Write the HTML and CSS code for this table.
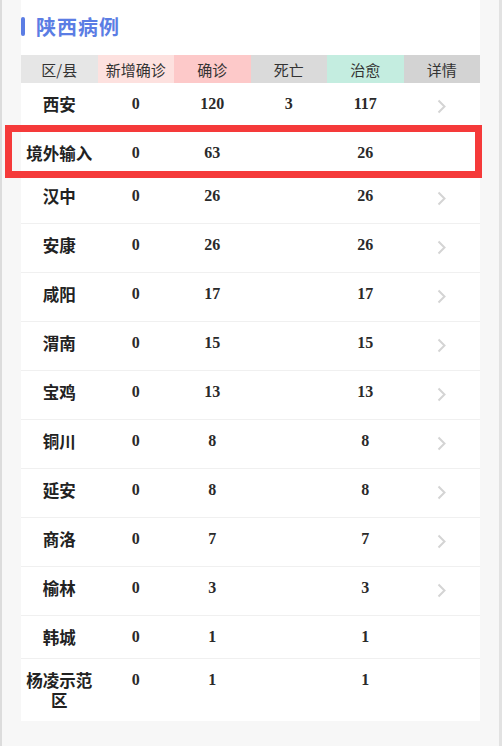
FILE: index.html
```html
<!DOCTYPE html>
<html lang="zh">
<head>
<meta charset="utf-8">
<title>陕西病例</title>
<link rel="stylesheet" href="styles.css">
</head>
<body>
<div class="page">
  <div class="card">
    <h2 class="title"><span class="bar"></span>陕西病例</h2>
    <div class="table">
      <div class="head">
        <div class="h h-area">区/县</div>
        <div class="h h-new">新增确诊</div>
        <div class="h h-conf">确诊</div>
        <div class="h h-dead">死亡</div>
        <div class="h h-cure">治愈</div>
        <div class="h h-more">详情</div>
      </div>
      <div class="row more"><div class="name">西安</div><div>0</div><div>120</div><div>3</div><div>117</div><div class="chev"><svg width="9" height="15" viewBox="0 0 9 15"><path d="M1.5 1.5 L7.5 7.5 L1.5 13.5" fill="none" stroke="#d4d4d4" stroke-width="2"/></svg></div></div>
      <div class="row mark"><div class="name">境外输入</div><div>0</div><div>63</div><div></div><div>26</div><div></div><span class="box"></span></div>
      <div class="row more"><div class="name">汉中</div><div>0</div><div>26</div><div></div><div>26</div><div class="chev"><svg width="9" height="15" viewBox="0 0 9 15"><path d="M1.5 1.5 L7.5 7.5 L1.5 13.5" fill="none" stroke="#d4d4d4" stroke-width="2"/></svg></div></div>
      <div class="row more"><div class="name">安康</div><div>0</div><div>26</div><div></div><div>26</div><div class="chev"><svg width="9" height="15" viewBox="0 0 9 15"><path d="M1.5 1.5 L7.5 7.5 L1.5 13.5" fill="none" stroke="#d4d4d4" stroke-width="2"/></svg></div></div>
      <div class="row more"><div class="name">咸阳</div><div>0</div><div>17</div><div></div><div>17</div><div class="chev"><svg width="9" height="15" viewBox="0 0 9 15"><path d="M1.5 1.5 L7.5 7.5 L1.5 13.5" fill="none" stroke="#d4d4d4" stroke-width="2"/></svg></div></div>
      <div class="row more"><div class="name">渭南</div><div>0</div><div>15</div><div></div><div>15</div><div class="chev"><svg width="9" height="15" viewBox="0 0 9 15"><path d="M1.5 1.5 L7.5 7.5 L1.5 13.5" fill="none" stroke="#d4d4d4" stroke-width="2"/></svg></div></div>
      <div class="row more"><div class="name">宝鸡</div><div>0</div><div>13</div><div></div><div>13</div><div class="chev"><svg width="9" height="15" viewBox="0 0 9 15"><path d="M1.5 1.5 L7.5 7.5 L1.5 13.5" fill="none" stroke="#d4d4d4" stroke-width="2"/></svg></div></div>
      <div class="row more"><div class="name">铜川</div><div>0</div><div>8</div><div></div><div>8</div><div class="chev"><svg width="9" height="15" viewBox="0 0 9 15"><path d="M1.5 1.5 L7.5 7.5 L1.5 13.5" fill="none" stroke="#d4d4d4" stroke-width="2"/></svg></div></div>
      <div class="row more"><div class="name">延安</div><div>0</div><div>8</div><div></div><div>8</div><div class="chev"><svg width="9" height="15" viewBox="0 0 9 15"><path d="M1.5 1.5 L7.5 7.5 L1.5 13.5" fill="none" stroke="#d4d4d4" stroke-width="2"/></svg></div></div>
      <div class="row more"><div class="name">商洛</div><div>0</div><div>7</div><div></div><div>7</div><div class="chev"><svg width="9" height="15" viewBox="0 0 9 15"><path d="M1.5 1.5 L7.5 7.5 L1.5 13.5" fill="none" stroke="#d4d4d4" stroke-width="2"/></svg></div></div>
      <div class="row more"><div class="name">榆林</div><div>0</div><div>3</div><div></div><div>3</div><div class="chev"><svg width="9" height="15" viewBox="0 0 9 15"><path d="M1.5 1.5 L7.5 7.5 L1.5 13.5" fill="none" stroke="#d4d4d4" stroke-width="2"/></svg></div></div>
      <div class="row"><div class="name">韩城</div><div>0</div><div>1</div><div></div><div>1</div><div></div></div>
      <div class="row last"><div class="name">杨凌示范区</div><div>0</div><div>1</div><div></div><div>1</div><div></div></div>
    </div>
  </div>
</div>
</body>
</html>
```
FILE: styles.css
```css
html, body {
  margin: 0;
  padding: 0;
  background: #f7f7f7;
}
.page {
  min-height: 746px;
  box-sizing: border-box;
  border-left: 2px solid #dcdcdc;
  border-right: 3px solid #e2e2e2;
  padding: 0 19px 0 19px;
  font-family: "Liberation Serif", "Noto Sans CJK SC", serif;
  color: #222;
}
.card {
  background: #fff;
  width: 459px;
}
.title {
  margin: 0;
  height: 55px;
  display: flex;
  align-items: center;
  padding-bottom: 2px;
  box-sizing: border-box;
  font-family: "Noto Sans CJK SC", sans-serif;
  font-weight: 700;
  font-size: 20px;
  color: #5b7de4;
  letter-spacing: 1px;
}
.bar {
  width: 4px;
  height: 19px;
  border-radius: 2px;
  background: #5b7de4;
  margin-right: 11px;
}
.head {
  display: grid;
  grid-template-columns: repeat(6, 1fr);
  height: 28px;
}
.h {
  display: flex;
  align-items: center;
  justify-content: center;
  font-family: "Noto Sans CJK SC", sans-serif;
  font-size: 15px;
  color: #333;
}
.h-area { background: #e6e6e6; }
.h-new { background: #fde1df; }
.h-conf { background: #fdc9c9; }
.h-dead { background: #dadada; }
.h-cure { background: #c4ede0; }
.h-more { background: #d3d3d3; }
.row {
  position: relative;
  display: grid;
  grid-template-columns: repeat(6, 1fr);
  align-items: start;
  padding: 11px 0 0;
  height: 43px;
  box-sizing: border-box;
  border-bottom: 1px solid #f0f0f0;
  font-size: 16px;
  line-height: 20px;
  font-weight: 700;
  text-align: center;
  color: #2a2a2a;
}
.row.more { height: 49px; }
.row.mark { height: 43px; }
.row.last {
  height: auto;
  padding-bottom: 11px;
  border-bottom: none;
}
.name {
  padding: 0 2px;
  font-family: "Noto Sans CJK SC", sans-serif;
  font-size: 16.5px;
  color: #222;
}
.chev {
  display: flex;
  justify-content: center;
  padding-top: 5px;
}
.box {
  position: absolute;
  left: -16px;
  top: -7px;
  right: -2px;
  bottom: -4px;
  border: 7px solid #f53a3a;
  pointer-events: none;
}
```
